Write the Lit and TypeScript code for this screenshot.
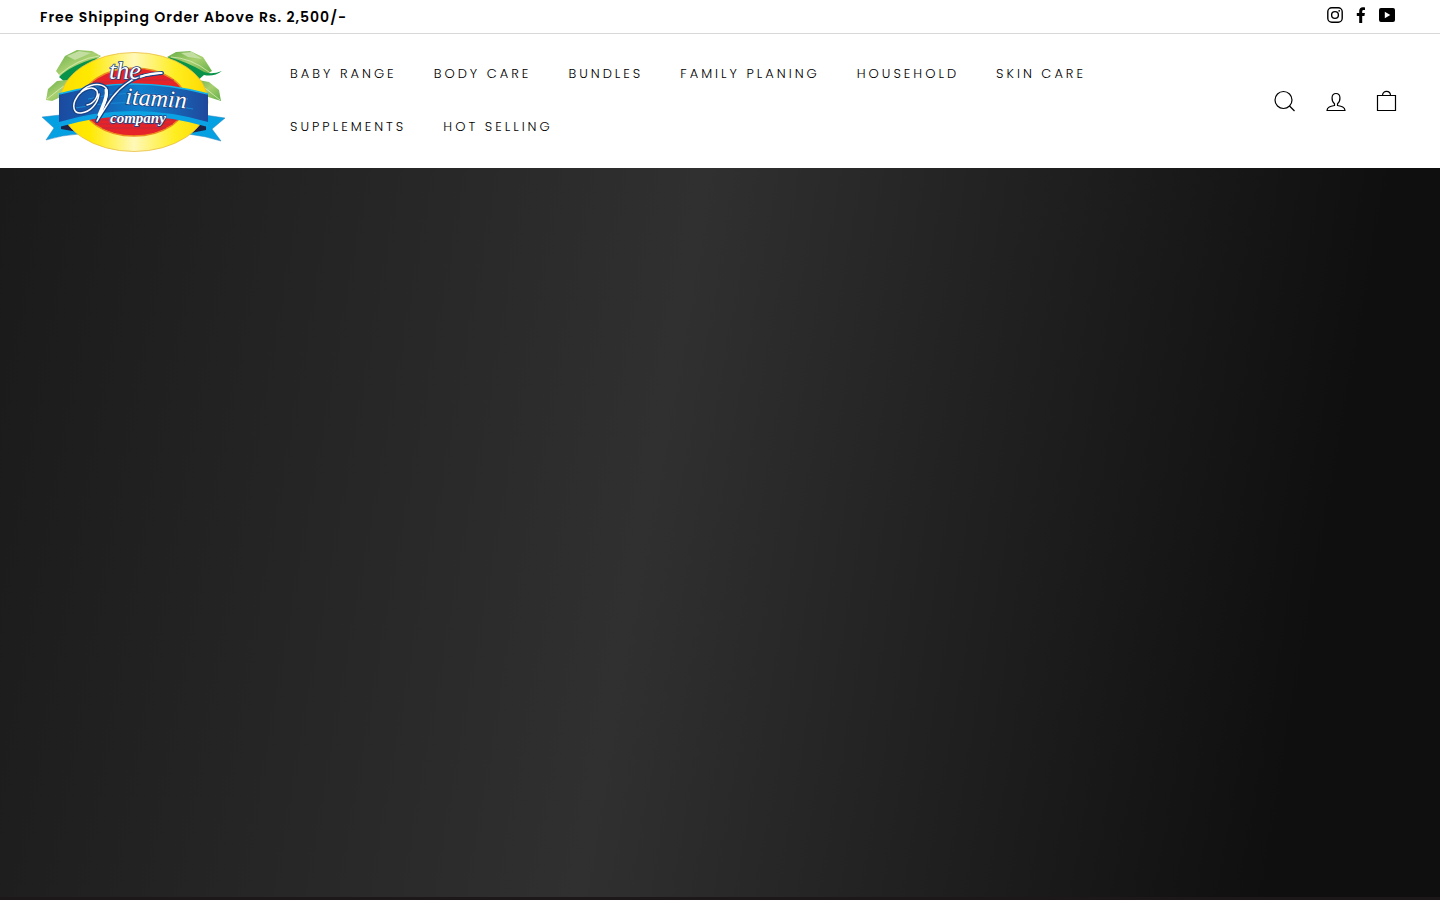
import { LitElement, html, css } from "lit";
import { customElement } from "lit/decorators.js";

const LINKS = ["Baby Range", "Body Care", "Bundles", "Family Planing", "Household", "Skin Care", "Supplements", "Hot Selling"];

@customElement("app-root")
export class AppRoot extends LitElement {
  static styles = css`
    :host { display: flex; flex-direction: column; min-height: 100vh; background: #fff; color: #000; font-family: Poppins, Inter, "Open Sans", sans-serif; }
    a { color: inherit; text-decoration: none; }
    svg { display: block; }
    .bar { display: flex; justify-content: space-between; align-items: center; padding: 0 40px; height: 33px; border-bottom: 1px solid #d8d8d8; }
    .notice { margin: 0; font-size: 14px; line-height: 20px; font-weight: 600; letter-spacing: 1px; }
    .social { display: flex; gap: 10px; padding: 0 5px 4px 0; }
    .header { display: flex; align-items: center; padding: 14px 38px; gap: 44px; }
    .logo { flex: none; }
    .nav { flex: 1; display: flex; flex-wrap: wrap; column-gap: 37px; padding-left: 20px; max-width: 820px; }
    .nav a { font-size: 13px; line-height: 20px; padding: 16px 0 17px; font-weight: 300; letter-spacing: 3px; text-transform: uppercase; white-space: nowrap; }
    .tools { display: flex; gap: 21px; margin-left: auto; }
    .tool { display: block; border: 0; padding: 0; background: none; color: inherit; cursor: pointer; }
    .hero { flex: 1; background: linear-gradient(100deg, #1a1a1a 0%, #303030 45%, #0f0f0f 89%); border-bottom: 3px solid #1c1719; }
  `;

  render() {
    return html`
      <div class="bar">
        <p class="notice">Free Shipping Order Above Rs. 2,500/-</p>
        <div class="social">
          <a href="#" aria-label="Instagram"><svg width="16" height="16" viewBox="0 0 16 16" fill="none" stroke="#000" stroke-width="1.4"><rect x=".8" y=".8" width="14.4" height="14.4" rx="4"/><circle cx="8" cy="8" r="3.4"/><circle cx="12.2" cy="3.8" r=".9" fill="#000" stroke="none"/></svg></a>
          <a href="#" aria-label="Facebook"><svg width="16" height="16" viewBox="0 0 16 16"><path d="M6.2 16V9H3.8V6h2.4V4.1C6.2 1.6 7.600.3 9.800.3c1 0 2.200.2 2.200.2V3h-1.300C9.500 3 9.200 3.700 9.200 4.400V6h2.700l-.5 3H9.200v7z"/></svg></a>
          <a href="#" aria-label="YouTube"><svg width="16" height="16" viewBox="0 0 16 16"><path fill-rule="evenodd" d="M2 1h12q2 0 2 2v10q0 2-2 2H2q-2 0-2-2V3q0-2 2-2zm3.800 3.800v6.400L11.300 8z"/></svg></a>
        </div>
      </div>
      <header class="header">
        <a class="logo" href="#" aria-label="The Vitamin Company">
          <svg width="188" height="106" viewBox="38 48 188 106">
            <defs>
              <linearGradient id="gold"><stop stop-color="#ffdf00"/><stop offset=".2" stop-color="#ffe900"/><stop offset=".5" stop-color="#fff8b8"/><stop offset=".78" stop-color="#ffed20"/><stop offset="1" stop-color="#ffd900"/></linearGradient>
              <linearGradient id="ribbon"><stop stop-color="#1b4aa0"/><stop offset=".3" stop-color="#1563b5"/><stop offset=".55" stop-color="#0d80cd"/><stop offset="1" stop-color="#20489c"/></linearGradient>
              <linearGradient id="leaf" x2="1" y2="1"><stop stop-color="#65ad45"/><stop offset=".5" stop-color="#a9d070"/><stop offset="1" stop-color="#5fae45"/></linearGradient>
            </defs>
            <g stroke-linejoin="round">
              <path fill="url(#leaf)" d="M56 71l9-15 12-6 15 1 9 5L83 70 60 76z"/>
              <path fill="#c2dea0" d="M67 56l12-5 12 2-16 7z"/>
              <path fill="#08934a" d="M59 77q12-12 38-19L83 72 66 83z"/>
              <path fill="url(#leaf)" d="M46 100l2-11 9-8 19-2-11 16-13 6z"/>
              <path d="M47 99q12-10 27-20M59 75q18-16 40-19" fill="none" stroke="#e6f2c4" stroke-width=".7"/>
              <path fill="url(#leaf)" d="M212 71l-9-14-13-6-14 1-9 5 18 14 22 3z"/>
              <path fill="#c2dea0" d="M181 53l11-1 10 7-14-2z"/>
              <path fill="#08934a" d="M168 57q20 5 36 15 8 3 18-1-8 6-18 4l-8 7z"/>
              <path fill="url(#leaf)" d="M221 101l-2-11-10-8-16-3 9 16z"/>
              <path d="M220 100q-12-10-26-20M209 72q-18-14-38-15" fill="none" stroke="#e6f2c4" stroke-width=".7"/>
            </g>
            <path fill="#05a0e2" stroke="#2f83bd" stroke-width=".5" d="M42 117l27-3 10 20q-17 1-33 6l8-12zM225 118l-27-4-10 20q17 2 33 7l-9-12z"/>
            <path fill="#1d2347" d="M61 117l22 9-5 6-17-3zM206 118l-21 9 6 6 15-3z"/>
            <ellipse cx="134" cy="102" rx="74" ry="49.500" fill="url(#gold)" stroke="#e9bd44" stroke-width=".8"/>
            <ellipse cx="134" cy="102" rx="52" ry="34" fill="#e52329" stroke="#ee8b1e" stroke-width="1.500"/>
            <path d="M90 120h88M95 124h78M102 128h64M93 82h20M140 80h34" stroke="#b52b45" stroke-width=".8"/>
            <path fill="#0aa2e3" d="M59 97q74-20 149 0v30q-75-22-149 0z"/>
            <path fill="url(#ribbon)" d="M59 94q74-20 149 0v28q-75-22-149 0z"/>
            <path fill="none" stroke="#11b4ec" stroke-width="1.500" d="M59 94q74-20 149 0"/>
            <path fill="none" stroke="#168ad5" d="M88 99q46-12 100 0M75 108q59-12 118 1"/>
            <g fill="none" stroke-linecap="round" stroke-linejoin="round">
              <path stroke="#174488" stroke-width="4" d="M87 105c6-1 12-8 10-14-4-6-15-2-20 6-6 9-3 17 4 16 10-1 17-10 18-19M81 92c7-8 19-10 25-4 4 6-2 18-9 33 9-14 16-28 29-37 11-9 22-9 36-11"/>
              <path stroke="#fff" stroke-width="1.500" d="M87 105c6-1 12-8 10-14-4-6-15-2-20 6-6 9-3 17 4 16 10-1 17-10 18-19M81 92c7-8 19-10 25-4 4 6-2 18-9 33 9-14 16-28 29-37 11-9 22-9 36-11"/>
              <path stroke="#fff" stroke-width="3" d="M106 90c2 6-3 15-7 25"/>
              <path stroke="#fff" stroke-width="2" d="M140 77q10-4 21-4"/>
            </g>
            <g fill="#fff" stroke="#214282" stroke-width="1.600" paint-order="stroke" font-family="Liberation Serif, serif" font-style="italic">
              <text x="109" y="79" font-size="26">the</text>
              <text x="125" y="104" font-size="24" transform="rotate(4 125 104)">itamin</text>
              <text x="110" y="123" font-size="15" font-weight="700">company</text>
            </g>
          </svg>
        </a>
        <nav class="nav" aria-label="Main">${LINKS.map((l) => html`<a href="#">${l}</a>`)}</nav>
        <div class="tools">
          <button class="tool" aria-label="Search"><svg width="30" height="30" viewBox="0 0 30 30" fill="none" stroke="#000" stroke-width="1.200"><circle cx="13.500" cy="14" r="8.500"/><path d="M19.500 20l5 5"/></svg></button>
          <button class="tool" aria-label="Account"><svg width="30" height="30" viewBox="0 0 30 30" fill="none" stroke="#000" stroke-width="1.200"><path d="M13.500 19.500v-1.800c-3-2-4-10.200 1.500-10.200s4.500 8.200 1.500 10.200v1.800c4 .8 7.500 1.500 7.500 5H6c0-3.500 3.500-4.200 7.500-5z"/></svg></button>
          <button class="tool" aria-label="Cart"><svg width="30" height="30" viewBox="0 0 30 30" fill="none" stroke="#000" stroke-width="1.200"><path d="M5.500 9.500h18v15h-18zM10.500 9.500c0-5.500 8-5.500 8 0"/></svg></button>
        </div>
      </header>
      <main class="hero"></main>
    `;
  }
}
